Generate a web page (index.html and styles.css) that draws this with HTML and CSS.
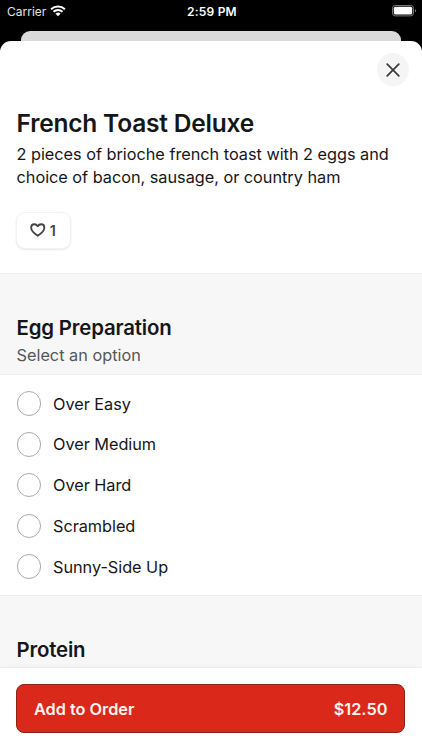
FILE: index.html
```html
<!DOCTYPE html>
<html lang="en">
<head>
<meta charset="utf-8">
<title>French Toast Deluxe</title>
<link rel="stylesheet" href="styles.css">
</head>
<body>
<div class="screen">
  <header class="status">
    <div class="carrier"><span class="carrier-name">Carrier</span>
      <svg class="wifi" viewBox="0 0 16 12" width="16" height="12"><path d="M1.1 4.3a10 10 0 0 1 13.8 0M3.5 6.8a6.5 6.5 0 0 1 9 0" fill="none" stroke="#fff" stroke-width="2"/><path d="M8 11.2 5.5 8.8a3.6 3.6 0 0 1 5 0Z" fill="#fff"/></svg>
    </div>
    <div class="time">2:59 PM</div>
    <svg class="battery" viewBox="0 0 25 12" width="25" height="12"><rect x=".5" y=".5" width="21" height="10.4" rx="2.8" fill="none" stroke="#777"/><rect x="1.8" y="1.8" width="18.4" height="7.8" rx="1.5" fill="#fff"/><path d="M23 4v3.6c1.5-.6 1.5-3 0-3.6Z" fill="#777"/></svg>
  </header>
  <div class="behind"></div>
  <main class="sheet">
    <section class="intro">
      <div class="close-row"><button class="close" aria-label="Close"><svg viewBox="0 0 14 14" width="14" height="14"><path d="M1.2 1.2 12.8 12.8M12.8 1.2 1.2 12.8" stroke="#38383a" stroke-width="1.7" stroke-linecap="round"/></svg></button></div>
      <h1>French Toast Deluxe</h1>
      <p class="description">2 pieces of brioche french toast with 2 eggs and<br>choice of bacon, sausage, or country ham</p>
      <button class="like"><svg viewBox="0 0 16 14" width="16" height="14"><path d="M8 12.9C5.6 11.3 1.2 8 1.2 4.6 1.2 2.6 2.7 1.1 4.5 1.1 6 1.1 7.2 1.9 8 3.2 8.8 1.9 10 1.1 11.5 1.1c1.8 0 3.3 1.5 3.3 3.5 0 3.4-4.4 6.7-6.8 8.3Z" fill="none" stroke="#444446" stroke-width="1.9" stroke-linejoin="round"/></svg><span>1</span></button>
    </section>
    <section class="group-head">
      <h2>Egg Preparation</h2>
      <p class="hint">Select an option</p>
    </section>
    <ul class="options">
      <li><span class="radio"></span><span class="label">Over Easy</span></li>
      <li><span class="radio"></span><span class="label">Over Medium</span></li>
      <li><span class="radio"></span><span class="label">Over Hard</span></li>
      <li><span class="radio"></span><span class="label">Scrambled</span></li>
      <li><span class="radio"></span><span class="label">Sunny-Side Up</span></li>
    </ul>
    <section class="group-head protein"><h2>Protein</h2></section>
    <footer class="order-bar">
      <button class="order"><span>Add to Order</span><span>$12.50</span></button>
    </footer>
  </main>
</div>
</body>
</html>
```

FILE: styles.css
```css
* { box-sizing: border-box; }
body { margin: 0; background: #000; font-family: Inter, sans-serif; color: #161618; }
h1, h2, p, ul { margin: 0; padding: 0; }
button { font-family: inherit; padding: 0; border: 0; }
svg { display: block; flex: none; }
.screen { width: 422px; height: 750px; overflow: hidden; display: flex; flex-direction: column; }
.status { height: 31px; flex: none; display: grid; grid-template-columns: 1fr auto 1fr; padding: 0 5px 9px 7px; align-items: center; color: #fff; }
.carrier { display: flex; align-items: center; gap: 4px; }
.carrier-name { font-size: 12px; letter-spacing: 0; color: #e4e4e4; }
.time { font-size: 12px; font-weight: 600; letter-spacing: .2px; }
.battery { justify-self: end; }
.behind { height: 10px; flex: none; margin: 0 21px; background: #dadada; border-radius: 9px 9px 0 0; }
.sheet { flex: 1; min-height: 0; display: flex; flex-direction: column; background: #fff; border-radius: 11px 11px 0 0; overflow: hidden; }
.intro { height: 232px; flex: none; padding: 12px 13px 0 16.5px; }
.close-row { display: flex; justify-content: flex-end; }
.close { width: 32px; height: 33px; border-radius: 50%; background: #f5f5f5; display: flex; align-items: center; justify-content: center; }
h1 { margin-top: 22px; font-size: 24.5px; line-height: 30px; font-weight: 600; letter-spacing: -.19px; }
.description { margin-top: 5px; font-size: 16.3px; line-height: 22.8px; letter-spacing: -.02px; white-space: nowrap; }
.like { margin-top: 24.4px; width: 53px; height: 35px; display: flex; align-items: center; justify-content: center; gap: 4px; background: #fff; border-radius: 8px; box-shadow: 0 0 0 1px #f3f3f3, 0 1px 2px 1px rgba(0,0,0,.1); font-size: 14.3px; font-weight: 600; color: #444446; }
.like svg { width: 15.5px; }
.group-head { height: 102px; flex: none; padding: 41.5px 16.5px 0; background: #f7f7f7; border-top: 1px solid #ececec; border-bottom: 1px solid #ececec; }
h2 { font-size: 20.4px; line-height: 24px; font-weight: 600; letter-spacing: -.17px; }
.hint { margin-top: 4.5px; font-size: 16.3px; line-height: 23px; color: #565658; }
.options { list-style: none; height: 220px; flex: none; padding: 8.3px 16.5px 0; }
.options li { height: 40.75px; display: flex; align-items: center; gap: 12px; font-size: 16.3px; letter-spacing: -.04px; }
.radio { width: 24.5px; height: 24.5px; flex: none; border: 1px solid #aaa; border-radius: 50%; }
.protein { height: 73px; border-bottom: 0; }
.order-bar { flex: 1; padding: 16px 16.4px 0; background: #fff; box-shadow: 0 -1px 2px rgba(0,0,0,.06); }
.order { width: 389px; height: 49px; padding: 0 17px 0 16.5px; display: flex; align-items: center; justify-content: space-between; background: #da291a; border: 1px solid #8c2118; border-radius: 8px; color: #fff3ef; font-size: 16.3px; font-weight: 600; }
```
